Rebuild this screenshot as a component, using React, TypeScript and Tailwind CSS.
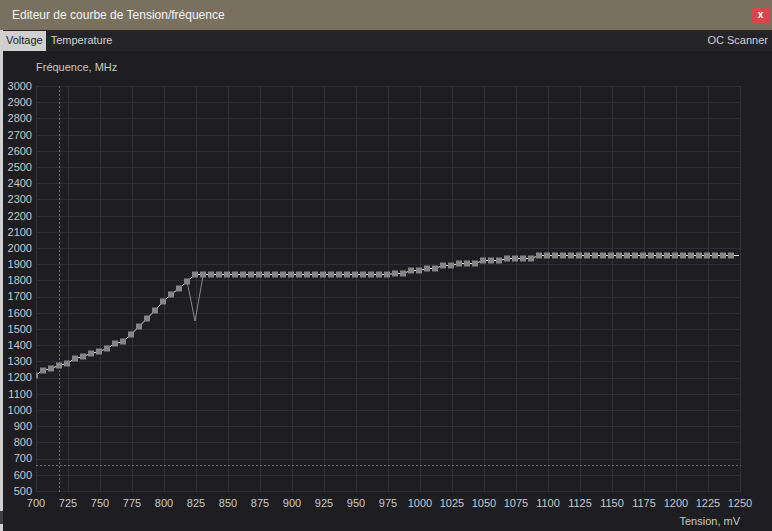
import React from 'react';

const yLabels = Array.from({ length: 26 }, (_, i) => 3000 - i * 100);
const xLabels = Array.from({ length: 23 }, (_, i) => 700 + i * 25);

// curve points in page pixels (x = 35 + 8k)
const curveY = [
    375, 370, 368, 365, 363, 358, 356, 353, 351, 348, 343, 341, 334, 326, 318, 310, 301, 294, 288, 281,
];
const points: { x: number; y: number }[] = [];
for (let k = 0; k <= 87; k++) {
    let y = 254.7;
    if (k < 20) y = curveY[k];
    else if (k <= 44) y = 274.3;
    else if (k <= 46) y = 272.7;
    else if (k <= 48) y = 269.7;
    else if (k <= 50) y = 267.7;
    else if (k <= 52) y = 264.7;
    else if (k <= 55) y = 262.7;
    else if (k <= 58) y = 259.7;
    else if (k <= 62) y = 257.7;
    points.push({ x: 35 + 8 * k - 36, y: Math.round(y - 86) });
}

const Plot: React.FC = () => {
    const line = [...points, { x: 739 - 36, y: 169 }].map(p => `${p.x},${p.y + 0.5}`).join(' ');
    return (
        <svg width="706" height="406" className="block">
            {yLabels.map((_, i) => (
                <line key={'h' + i} x1="0" x2="705" y1={Math.round(16.2 * i) + 0.5} y2={Math.round(16.2 * i) + 0.5} stroke="#2d2d33" strokeWidth="1" />
            ))}
            {xLabels.map((_, j) => (
                <line key={'v' + j} x1={32 * j + 0.5} x2={32 * j + 0.5} y1="0" y2="406" stroke="#313137" strokeWidth="1" />
            ))}
            <line x1="23.5" x2="23.5" y1="0" y2="406" stroke="#6b6b6b" strokeWidth="1" strokeDasharray="2 2" />
            <line x1="0" x2="705" y1="379.5" y2="379.5" stroke="#6b6b6b" strokeWidth="1" strokeDasharray="2 2" />
            <polyline points="151,195 159,235 167,190" fill="none" stroke="#8a8a8a" strokeWidth="1" />
            <polyline points={line} fill="none" stroke="#e2e2e2" strokeWidth="1" />
            {points.map((p, i) => (
                <rect key={i} x={p.x - 3} y={p.y - 2.5} width="6" height="6" fill="#858585" />
            ))}
        </svg>
    );
};

const App: React.FC = () => {
    return (
        <div className="w-[772px] h-[531px] flex flex-col overflow-hidden bg-[#1d1d22] font-['Liberation_Sans',Arial,sans-serif]">
            {/* Title bar */}
            <div className="h-[30px] shrink-0 bg-[#797060] flex items-center justify-between pl-[12px] pr-[3px]">
                <span className="text-[12px] text-[#f4f4f4]">Editeur de courbe de Tension/fréquence</span>
                <button className="w-[17px] h-[17px] bg-[#d9454d] text-white text-[10px] font-bold leading-none flex items-center justify-center">
                    x
                </button>
            </div>

            <div className="flex flex-1 min-h-0">
                {/* desktop strip behind the window */}
                <div className="w-[3px] shrink-0 flex flex-col">
                    <div className="h-[481px] bg-[#d0d0d0]" />
                    <div className="h-[13px] bg-[#3f3f3f]" />
                    <div className="flex-1 bg-[#d0d0d0]" />
                </div>

                <div className="flex-1 flex flex-col min-w-0">
                    {/* Tabs */}
                    <div className="h-[21px] shrink-0 bg-[#252529] flex items-center text-[11px]">
                        <div className="h-[20px] px-[3px] bg-[#cfcfd0] text-[#1b1b1b] flex items-center">Voltage</div>
                        <div className="pl-[5px] text-[#d2d2d2]">Temperature</div>
                        <div className="ml-auto pr-[4px] text-[#cfcfcf]">OC Scanner</div>
                    </div>

                    {/* Chart */}
                    <div className="flex-1 bg-[#1d1d22] pt-[8px] text-[11px] text-[#c9c9c9]">
                        <div className="h-[16px] leading-[16px] pl-[33px]">Fréquence, MHz</div>
                        <div className="flex items-start mt-[3px]">
                            <div className="w-[33px] shrink-0 pr-[4px] flex flex-col items-end">
                                {yLabels.map(v => (
                                    <div key={v} className="h-[16.2px] leading-[16.2px]">{v}</div>
                                ))}
                            </div>
                            <div className="flex flex-col mt-[8px]">
                                <Plot />
                                <div className="flex ml-[-16px] mt-[4px] h-[14px] leading-[14px] text-[#c9c9c9]">
                                    {xLabels.map(v => (
                                        <div key={v} className="w-[32px] shrink-0 text-center">{v}</div>
                                    ))}
                                </div>
                                <div className="w-[704px] text-right mt-[4px] h-[14px] leading-[14px]">Tension, mV</div>
                            </div>
                        </div>
                    </div>
                </div>
            </div>
        </div>
    );
};

export default App;
